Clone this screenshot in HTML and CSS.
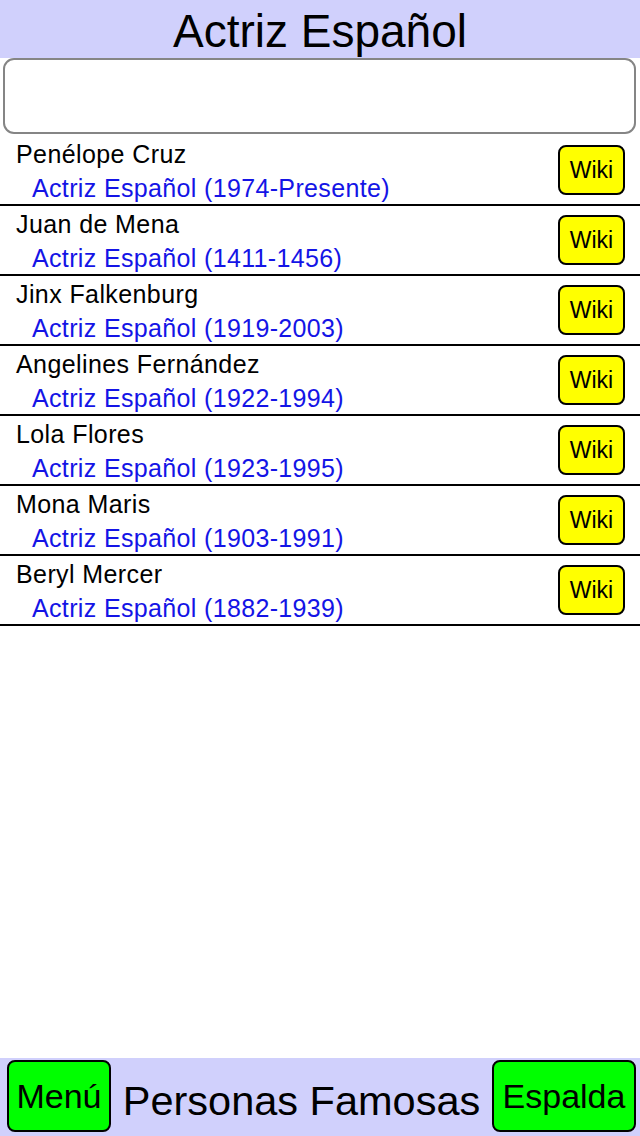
FILE: index.html
```html
<!DOCTYPE html>
<html>
<head>
<title>Actriz Español</title>
<meta charset="utf-8">
<link rel="stylesheet" href="styles.css">
</head>
<body>

<div id="app">
  <div class="top-bar">
    <h1>Actriz Español</h1>
  </div>

  <div class="search-box"></div>

  <div class="person-list">
    <div class="person-row">
      <div class="person-text">
        <div class="person-name">Penélope Cruz</div>
        <div class="person-info">Actriz Español (1974-Presente)</div>
      </div>
      <button class="wiki-btn">Wiki</button>
    </div>
    <div class="person-row">
      <div class="person-text">
        <div class="person-name">Juan de Mena</div>
        <div class="person-info">Actriz Español (1411-1456)</div>
      </div>
      <button class="wiki-btn">Wiki</button>
    </div>
    <div class="person-row">
      <div class="person-text">
        <div class="person-name">Jinx Falkenburg</div>
        <div class="person-info">Actriz Español (1919-2003)</div>
      </div>
      <button class="wiki-btn">Wiki</button>
    </div>
    <div class="person-row">
      <div class="person-text">
        <div class="person-name">Angelines Fernández</div>
        <div class="person-info">Actriz Español (1922-1994)</div>
      </div>
      <button class="wiki-btn">Wiki</button>
    </div>
    <div class="person-row">
      <div class="person-text">
        <div class="person-name">Lola Flores</div>
        <div class="person-info">Actriz Español (1923-1995)</div>
      </div>
      <button class="wiki-btn">Wiki</button>
    </div>
    <div class="person-row">
      <div class="person-text">
        <div class="person-name">Mona Maris</div>
        <div class="person-info">Actriz Español (1903-1991)</div>
      </div>
      <button class="wiki-btn">Wiki</button>
    </div>
    <div class="person-row">
      <div class="person-text">
        <div class="person-name">Beryl Mercer</div>
        <div class="person-info">Actriz Español (1882-1939)</div>
      </div>
      <button class="wiki-btn">Wiki</button>
    </div>
  </div>

  <div class="bottom-bar">
    <button class="nav-btn menu-btn">Menú</button>
    <div class="bottom-title">Personas Famosas</div>
    <button class="nav-btn back-btn">Espalda</button>
  </div>
</div>

</body>
</html>
```

FILE: styles.css
```css
body {
  margin: 0;
  font-family: 'Liberation Sans', Arial, sans-serif;
  background: white;
  color: black;
}

#app {
  display: flex;
  flex-direction: column;
  height: 1136px;
  width: 640px;
}

.top-bar {
  background-color: #d0d0fc;
  height: 58px;
  display: flex;
  justify-content: center;
}

h1 {
  margin: 0;
  font-weight: normal;
  font-size: 46px;
  line-height: 62px;
}

.search-box {
  margin: 0 4px 2px 3px;
  height: 72px;
  border: 2px solid #858585;
  border-radius: 11px;
  background: white;
}

.person-list {
  flex: 1;
}

.person-row {
  display: flex;
  align-items: center;
  height: 68px;
  border-bottom: 2px solid black;
  padding: 0 15px 0 16px;
}

.person-text {
  flex: 1;
  align-self: flex-start;
  padding-top: 4px;
}

.person-name {
  font-size: 25px;
  line-height: 28px;
  letter-spacing: 0.4px;
}

.person-info {
  font-size: 25px;
  line-height: 28px;
  letter-spacing: 0.35px;
  margin-top: 6px;
  padding-left: 16px;
  color: #1414e6;
}

.wiki-btn {
  width: 67px;
  height: 50px;
  padding: 0;
  background-color: #ffff00;
  border: 2px solid black;
  border-radius: 8px;
  font-family: 'Liberation Sans', Arial, sans-serif;
  font-size: 23px;
  color: black;
}

.bottom-bar {
  background-color: #d0d0fc;
  height: 78px;
  display: flex;
  align-items: flex-start;
  padding: 2px 4px 0 7px;
  box-sizing: border-box;
}

.nav-btn {
  height: 72px;
  padding: 0;
  background-color: #00ff00;
  border: 2px solid black;
  border-radius: 8px;
  font-family: 'Liberation Sans', Arial, sans-serif;
  font-size: 34px;
  color: black;
}

.menu-btn {
  width: 104px;
}

.back-btn {
  width: 144px;
}

.bottom-title {
  flex: 1;
  text-align: center;
  font-size: 41.5px;
  line-height: 82px;
}
```
